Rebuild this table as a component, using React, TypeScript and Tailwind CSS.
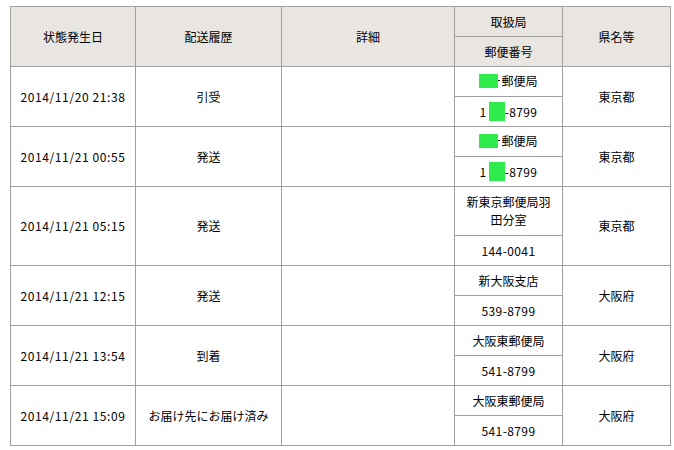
const rows = [
  { date: "2014/11/20 21:38", status: "引受", office: "masked", zip: "masked", pref: "東京都" },
  { date: "2014/11/21 00:55", status: "発送", office: "masked", zip: "masked", pref: "東京都" },
  { date: "2014/11/21 05:15", status: "発送", office: "新東京郵便局羽田分室", zip: "144-0041", pref: "東京都" },
  { date: "2014/11/21 12:15", status: "発送", office: "新大阪支店", zip: "539-8799", pref: "大阪府" },
  { date: "2014/11/21 13:54", status: "到着", office: "大阪東郵便局", zip: "541-8799", pref: "大阪府" },
  { date: "2014/11/21 15:09", status: "お届け先にお届け済み", office: "大阪東郵便局", zip: "541-8799", pref: "大阪府" },
];

const cell = "border border-[#a0a0a0] text-center align-middle p-0 leading-[18px]";

const MaskedOffice = () => (
  <span className="inline-flex items-center">
    <span className="inline-block w-[19px] h-[14px] bg-[#2eea4a]"></span>
    <span className="inline-block w-[2px] h-[1px] bg-black mr-[1px]"></span>
    郵便局
  </span>
);

const MaskedZip = () => (
  <span className="inline-flex items-center tracking-[0.4px]">
    1
    <span className="inline-block w-[16px] h-[19px] bg-[#2eea4a] ml-[2px]"></span>
    -8799
  </span>
);

const App = () => {
  return (
    <div
      className="min-h-screen bg-white pt-[6px] pl-[10px] text-[12px] text-black"
      style={{ fontFamily: '"Noto Sans CJK JP", "Liberation Sans", sans-serif' }}
    >
      <table className="border-collapse table-fixed w-[660px]">
        <colgroup>
          <col className="w-[125px]" />
          <col className="w-[146px]" />
          <col className="w-[173px]" />
          <col className="w-[108px]" />
          <col className="w-[108px]" />
        </colgroup>
        <thead>
          <tr className="bg-[#e9e5e1] h-[30px]">
            <th rowSpan={2} className={`${cell} font-normal`}>状態発生日</th>
            <th rowSpan={2} className={`${cell} font-normal`}>配送履歴</th>
            <th rowSpan={2} className={`${cell} font-normal`}>詳細</th>
            <th className={`${cell} font-normal`}>取扱局</th>
            <th rowSpan={2} className={`${cell} font-normal`}>県名等</th>
          </tr>
          <tr className="bg-[#e9e5e1] h-[30px]">
            <th className={`${cell} font-normal`}>郵便番号</th>
          </tr>
        </thead>
        <tbody>
          {rows.map((r, i) => (
            <>
              <tr key={`a${i}`} className="h-[30px]">
                <td rowSpan={2} className={`${cell} tracking-[0.6px]`}>{r.date}</td>
                <td rowSpan={2} className={cell}>{r.status}</td>
                <td rowSpan={2} className={cell}></td>
                <td className={`${cell} px-[6px] ${r.office.length > 7 ? "py-[6px]" : ""}`}>
                  {r.office === "masked" ? <MaskedOffice /> : r.office}
                </td>
                <td rowSpan={2} className={cell}>{r.pref}</td>
              </tr>
              <tr key={`b${i}`} className="h-[30px]">
                <td className={`${cell} tracking-[0.4px]`}>
                  {r.zip === "masked" ? <MaskedZip /> : r.zip}
                </td>
              </tr>
            </>
          ))}
        </tbody>
      </table>
    </div>
  );
};

export default App;
